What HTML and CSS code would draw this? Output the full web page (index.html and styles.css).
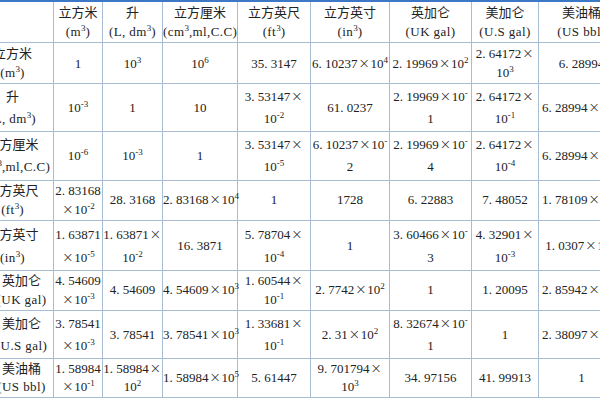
FILE: index.html
```html
<!DOCTYPE html>
<html lang="zh-CN">
<head>
<meta charset="utf-8">
<title>体积单位换算表</title>
<link rel="stylesheet" href="styles.css">
</head>
<body>
<table class="sheet">
  <colgroup>
    <col class="w0"><col class="w1"><col class="w2"><col class="w3"><col class="w4"><col class="w5"><col class="w6"><col class="w7"><col class="w8">
  </colgroup>
  <tr class="hd">
    <td></td>
    <td>立方米<br><span class="u">(m<span class="s">3</span>)</span></td>
    <td>升<br><span class="u">(L, dm<span class="s">3</span>)</span></td>
    <td>立方厘米<br><span class="u">(cm<span class="s">3</span>,ml,C.C)</span></td>
    <td>立方英尺<br><span class="u">(ft<span class="s">3</span>)</span></td>
    <td>立方英寸<br><span class="u">(in<span class="s">3</span>)</span></td>
    <td>英加仑<br><span class="u">(UK gal)</span></td>
    <td>美加仑<br><span class="u">(U.S gal)</span></td>
    <td>美油桶<br><span class="u">(US bbl)</span></td>
  </tr>
  <tr class="r1">
    <td class="lead">立方米<br><span class="u">(m<span class="s">3</span>)</span></td>
    <td>1</td>
    <td>10<span class="s">3</span></td>
    <td>10<span class="s">6</span></td>
    <td>35. 3147</td>
    <td>6. 10237<span class="x">×</span>10<span class="s">4</span></td>
    <td>2. 19969<span class="x">×</span>10<span class="s">2</span></td>
    <td>2. 64172<span class="x">×</span><br>10<span class="s">3</span></td>
    <td>6. 28994</td>
  </tr>
  <tr class="r2">
    <td class="lead">升<br><span class="u">(L, dm<span class="s">3</span>)</span></td>
    <td>10<span class="s">-3</span></td>
    <td>1</td>
    <td>10</td>
    <td>3. 53147<span class="x">×</span><br>10<span class="s">-2</span></td>
    <td>61. 0237</td>
    <td>2. 19969<span class="x">×</span>10<span class="s">-</span><br>1</td>
    <td>2. 64172<span class="x">×</span><br>10<span class="s">-1</span></td>
    <td>6. 28994<span class="x">×</span>10<span class="s">-3</span></td>
  </tr>
  <tr class="r3">
    <td class="lead">立方厘米<br><span class="u">(cm<span class="s">3</span>,ml,C.C)</span></td>
    <td>10<span class="s">-6</span></td>
    <td>10<span class="s">-3</span></td>
    <td>1</td>
    <td>3. 53147<span class="x">×</span><br>10<span class="s">-5</span></td>
    <td>6. 10237<span class="x">×</span>10<span class="s">-</span><br>2</td>
    <td>2. 19969<span class="x">×</span>10<span class="s">-</span><br>4</td>
    <td>2. 64172<span class="x">×</span><br>10<span class="s">-4</span></td>
    <td>6. 28994<span class="x">×</span>10<span class="s">-6</span></td>
  </tr>
  <tr class="r4">
    <td class="lead">立方英尺<br><span class="u">(ft<span class="s">3</span>)</span></td>
    <td>2. 83168<br><span class="x">×</span>10<span class="s">-2</span></td>
    <td>28. 3168</td>
    <td>2. 83168<span class="x">×</span>10<span class="s">4</span></td>
    <td>1</td>
    <td>1728</td>
    <td>6. 22883</td>
    <td>7. 48052</td>
    <td>1. 78109<span class="x">×</span>10<span class="s">-1</span></td>
  </tr>
  <tr class="r5">
    <td class="lead">立方英寸<br><span class="u">(in<span class="s">3</span>)</span></td>
    <td>1. 63871<br><span class="x">×</span>10<span class="s">-5</span></td>
    <td>1. 63871<span class="x">×</span><br>10<span class="s">-2</span></td>
    <td>16. 3871</td>
    <td>5. 78704<span class="x">×</span><br>10<span class="s">-4</span></td>
    <td>1</td>
    <td>3. 60466<span class="x">×</span>10<span class="s">-</span><br>3</td>
    <td>4. 32901<span class="x">×</span><br>10<span class="s">-3</span></td>
    <td>1. 0307<span class="x">×</span>10<span class="s">-4</span></td>
  </tr>
  <tr class="r6">
    <td class="lead shift">英加仑<br><span class="u">(UK gal)</span></td>
    <td>4. 54609<br><span class="x">×</span>10<span class="s">-3</span></td>
    <td>4. 54609</td>
    <td>4. 54609<span class="x">×</span>10<span class="s">3</span></td>
    <td>1. 60544<span class="x">×</span><br>10<span class="s">-1</span></td>
    <td>2. 7742<span class="x">×</span>10<span class="s">2</span></td>
    <td>1</td>
    <td>1. 20095</td>
    <td>2. 85942<span class="x">×</span>10<span class="s">-2</span></td>
  </tr>
  <tr class="r7">
    <td class="lead shift">美加仑<br><span class="u">(U.S gal)</span></td>
    <td>3. 78541<br><span class="x">×</span>10<span class="s">-3</span></td>
    <td>3. 78541</td>
    <td>3. 78541<span class="x">×</span>10<span class="s">3</span></td>
    <td>1. 33681<span class="x">×</span><br>10<span class="s">-1</span></td>
    <td>2. 31<span class="x">×</span>10<span class="s">2</span></td>
    <td>8. 32674<span class="x">×</span>10<span class="s">-</span><br>1</td>
    <td>1</td>
    <td>2. 38097<span class="x">×</span>10<span class="s">-2</span></td>
  </tr>
  <tr class="r8">
    <td class="lead shift">美油桶<br><span class="u">(US bbl)</span></td>
    <td>1. 58984<br><span class="x">×</span>10<span class="s">-1</span></td>
    <td>1. 58984<span class="x">×</span><br>10<span class="s">2</span></td>
    <td>1. 58984<span class="x">×</span>10<span class="s">5</span></td>
    <td>5. 61447</td>
    <td>9. 701794<span class="x">×</span><br>10<span class="s">3</span></td>
    <td>34. 97156</td>
    <td>41. 99913</td>
    <td>1</td>
  </tr>
</table>
</body>
</html>
```
FILE: styles.css
```css
html, body {
  margin: 0;
  padding: 0;
  background: #ffffff;
  overflow: hidden;
}

.sheet {
  margin-left: -24px;
  width: 649px;
  table-layout: fixed;
  border-collapse: separate;
  border-spacing: 0;
  border-top: 2px solid #3c78c6;
  font-family: "Liberation Serif", "Noto Sans CJK SC", serif;
  font-size: 13px;
  color: #222222;
}

.w0 { width: 78px; }
.w1 { width: 49px; }
.w2 { width: 60px; }
.w3 { width: 75px; }
.w4 { width: 73px; }
.w5 { width: 79px; }
.w6 { width: 82px; }
.w7 { width: 67px; }
.w8 { width: 86px; }

.hd { height: 41px; line-height: 19px; }
.r1 { height: 41px; line-height: 19px; }
.r2 { height: 48px; line-height: 22px; }
.r3 { height: 49px; line-height: 22px; }
.r4 { height: 40px; line-height: 18.5px; }
.r5 { height: 50px; line-height: 23px; }
.r6 { height: 40px; line-height: 18.5px; }
.r7 { height: 48px; line-height: 22px; }
.r8 { height: 39px; line-height: 18px; }

td {
  padding: 0;
  border-right: 1px solid #a6bdd4;
  border-bottom: 1px solid #a6bdd4;
  text-align: center;
  vertical-align: middle;
  white-space: nowrap;
  overflow: visible;
}

td.lead {
  padding-right: 4px;
}

td.shift {
  padding-left: 14px;
  padding-right: 0;
}

.u {
  letter-spacing: 0.4px;
}

.s {
  font-size: 9px;
  vertical-align: 5px;
  line-height: 0;
  letter-spacing: 0;
}

.x {
  display: inline-block;
  width: 13px;
  text-align: center;
  font-family: "DejaVu Sans", sans-serif;
  font-size: 14px;
  font-weight: 300;
  line-height: 0;
}
```
